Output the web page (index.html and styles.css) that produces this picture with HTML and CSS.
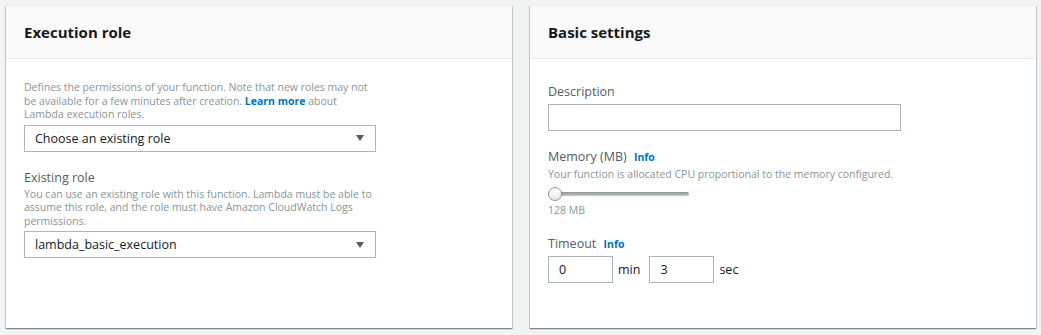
FILE: index.html
```html
<!DOCTYPE html>
<html lang="en">
<head>
  <meta charset="UTF-8">
  <title>Lambda function settings</title>
  <link rel="stylesheet" href="styles.css">
</head>
<body>
  <div class="panel">
    <div class="panel-header">
      <h2>Execution role</h2>
    </div>
    <div class="panel-body">
      <p class="hint wide">Defines the permissions of your function. Note that new roles may not be available for a few minutes after creation. <a href="#">Learn more</a> about Lambda execution roles.</p>
      <div class="select">
        <span>Choose an existing role</span>
        <i class="caret"></i>
      </div>

      <div class="field">
        <label>Existing role</label>
        <p class="hint wide">You can use an existing role with this function. Lambda must be able to assume this role, and the role must have Amazon CloudWatch Logs permissions.</p>
        <div class="select">
          <span>lambda_basic_execution</span>
          <i class="caret"></i>
        </div>
      </div>
    </div>
  </div>

  <div class="panel">
    <div class="panel-header">
      <h2>Basic settings</h2>
    </div>
    <div class="panel-body">
      <div class="field first">
        <label>Description</label>
        <input class="text-input" type="text" value="">
      </div>

      <div class="field">
        <label>Memory (MB) <a class="info" href="#">Info</a></label>
        <p class="hint">Your function is allocated CPU proportional to the memory configured.</p>
        <div class="slider">
          <div class="track"></div>
          <div class="thumb"></div>
        </div>
        <div class="slider-value">128 MB</div>
      </div>

      <div class="field timeout-field">
        <label>Timeout <a class="info" href="#">Info</a></label>
        <div class="timeout">
          <input class="small-input" type="text" value="0">
          <span>min</span>
          <input class="small-input" type="text" value="3">
          <span>sec</span>
        </div>
      </div>
    </div>
  </div>
</body>
</html>
```

FILE: styles.css
```css
html {
  height: 100%;
}
body {
  font-family: "Open Sans", "Noto Sans", Arial, sans-serif;
  background: #f2f3f3;
  color: #16191f;
  margin: 0;
  height: 100%;
  box-sizing: border-box;
  padding: 5px 5px 7px 6px;
  display: grid;
  grid-template-columns: 1fr 1fr;
  gap: 18px;
}
.panel {
  background: #fff;
  border-top: 1px solid #eaeded;
  box-shadow: 0 1px 1px 0 rgba(0, 28, 36, 0.3), 1px 1px 1px 0 rgba(0, 28, 36, 0.15), -1px 1px 1px 0 rgba(0, 28, 36, 0.15);
}
.panel-header {
  background: #fafafa;
  border-bottom: 1px solid #eaeded;
  padding: 0 18px;
  height: 52px;
  display: flex;
  align-items: center;
}
.panel-header h2 {
  margin: 0;
  font-size: 15px;
  font-weight: 700;
}
.panel-body {
  padding: 22px 18px;
}
.hint {
  margin: 0;
  font-size: 10.5px;
  line-height: 13.5px;
  color: #879596;
}
.hint.wide {
  max-width: 352px;
}
.hint a {
  color: #0073bb;
  font-weight: 700;
  text-decoration: none;
}
label {
  display: block;
  font-size: 12.5px;
  line-height: 17px;
  color: #545b64;
}
label + .hint {
  margin-top: 2px;
}
.info {
  color: #0073bb;
  font-size: 10.5px;
  font-weight: 700;
  text-decoration: none;
  margin-left: 4px;
}
.field {
  margin-top: 17px;
}
.field.first {
  margin-top: 2px;
}
.timeout-field {
  margin-top: 18px;
}
.select {
  margin-top: 3px;
  width: 352px;
  height: 27px;
  box-sizing: border-box;
  border: 1px solid #aab7b8;
  display: flex;
  align-items: center;
  justify-content: space-between;
  padding: 0 11px 0 10px;
  font-size: 12.5px;
}
.caret {
  width: 0;
  height: 0;
  border-left: 4.5px solid transparent;
  border-right: 4.5px solid transparent;
  border-top: 6px solid #545b64;
}
.text-input,
.small-input {
  display: block;
  box-sizing: border-box;
  border: 1px solid #aab7b8;
  border-radius: 0;
  height: 27px;
  font-family: inherit;
  font-size: 12.5px;
  color: #16191f;
  padding: 0 10px;
  outline: none;
}
.text-input {
  margin-top: 4px;
  width: 353px;
}
.slider {
  position: relative;
  width: 141px;
  height: 14px;
  margin-top: 5px;
}
.slider .track {
  position: absolute;
  left: 0;
  right: 0;
  top: 5px;
  height: 4px;
  border-radius: 2px;
  background: linear-gradient(#8d9494, #c3c8c8);
}
.slider .thumb {
  position: absolute;
  left: 0;
  top: 0;
  width: 12px;
  height: 12px;
  border-radius: 50%;
  border: 1px solid #8d9494;
  background: linear-gradient(#ffffff, #e8eaea);
}
.slider-value {
  font-size: 10.5px;
  color: #879596;
  margin-top: 2px;
}
.timeout {
  display: flex;
  align-items: center;
  gap: 5px;
  margin-top: 3px;
  font-size: 12.5px;
  color: #16191f;
}
.small-input {
  width: 65px;
}
.timeout span + .small-input {
  margin-left: 4px;
}
```
